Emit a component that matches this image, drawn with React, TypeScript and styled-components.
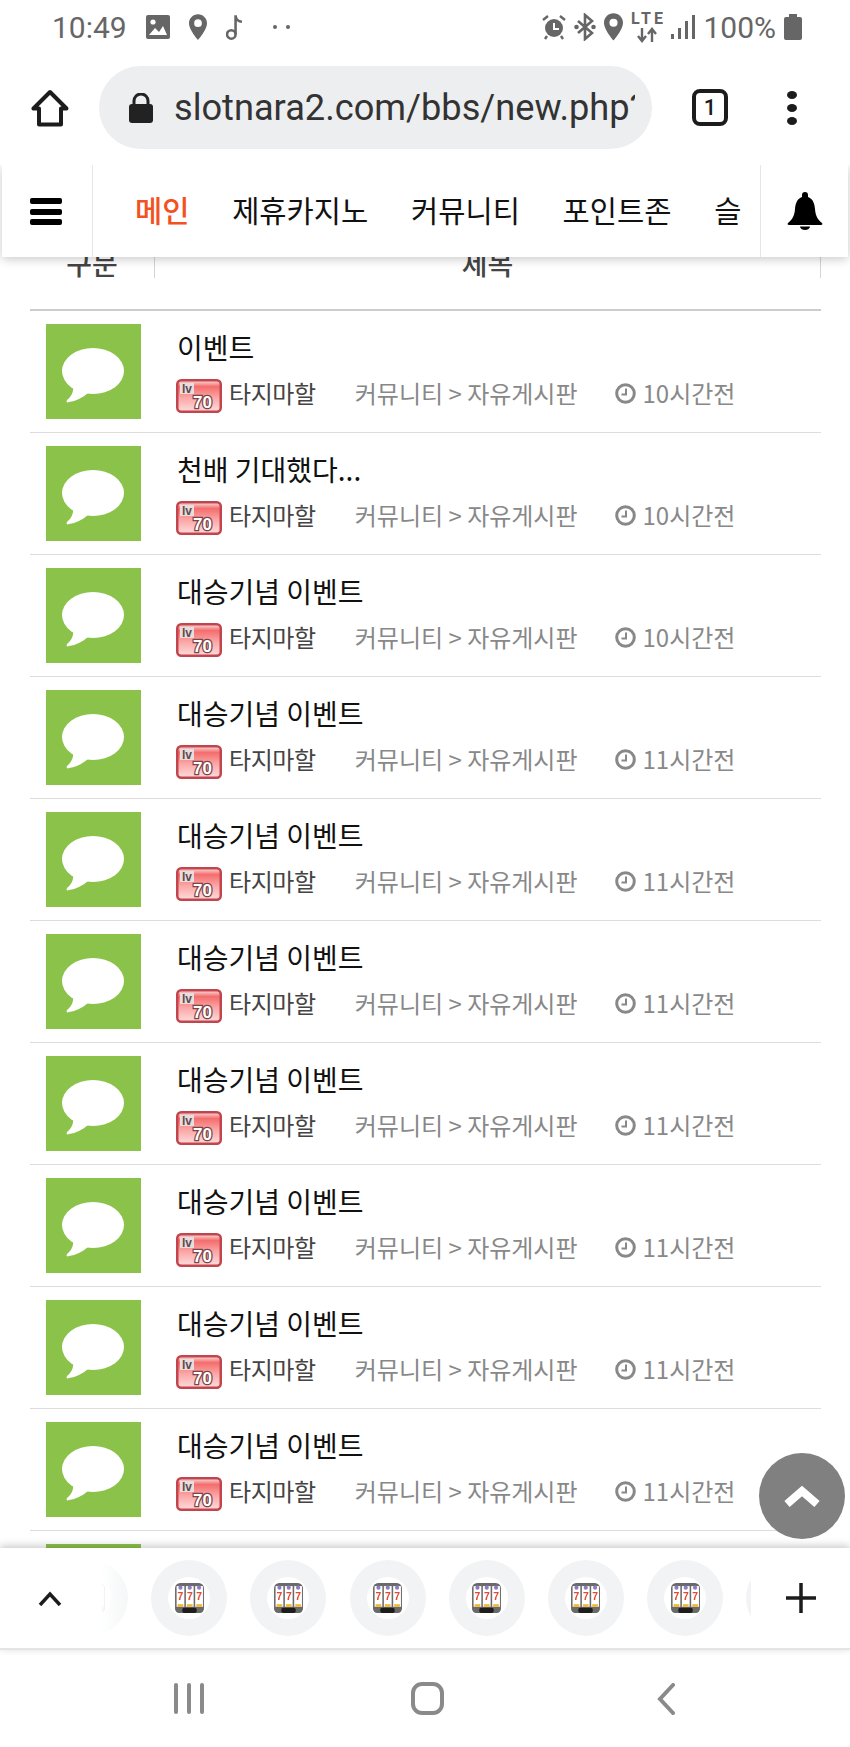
import React from 'react';
import styled, { createGlobalStyle } from 'styled-components';

const GlobalStyle = createGlobalStyle`
  html, body {
    margin: 0;
    padding: 0;
    background: #ffffff;
  }
  * {
    box-sizing: border-box;
  }
`;

const Page = styled.div`
  width: 850px;
  height: 1747px;
  display: flex;
  flex-direction: column;
  overflow: hidden;
  background: #ffffff;
  font-family: 'Noto Sans CJK KR', 'Liberation Sans', sans-serif;
`;

/* android status bar */
const StatusBar = styled.div`
  height: 60px;
  flex: none;
  display: flex;
  align-items: center;
  justify-content: space-between;
  padding: 0 48px 6px 52px;
  color: #666666;
  font-family: Roboto, 'Liberation Sans', sans-serif;
  font-size: 30px;
`;

const StatusGroup = styled.div<{ $gap: number }>`
  display: flex;
  align-items: center;
  gap: ${props => props.$gap}px;
`;

const StatusDots = styled.div`
  display: flex;
  gap: 9px;
  margin-left: 11px;

  span {
    width: 4px;
    height: 4px;
    border-radius: 50%;
    background: #666666;
  }
`;

/* chrome toolbar */
const BrowserBar = styled.div`
  height: 105px;
  flex: none;
  display: flex;
  align-items: center;
  padding: 6px 0 16px 31px;
`;

const UrlPill = styled.div`
  width: 553px;
  height: 83px;
  margin-left: 30px;
  display: flex;
  align-items: center;
  gap: 21px;
  padding: 0 17px 0 30px;
  border-radius: 42px;
  background: #eceef0;
  overflow: hidden;
`;

const UrlText = styled.div`
  flex: 1;
  overflow: hidden;
  white-space: nowrap;
  color: #333333;
  font-family: Roboto, 'Liberation Sans', sans-serif;
  font-size: 36.2px;
`;

const TabCount = styled.div`
  width: 36px;
  height: 37px;
  margin-left: 40px;
  display: flex;
  align-items: center;
  justify-content: center;
  border: 4px solid #1c1c1c;
  border-radius: 8px;
  color: #1c1c1c;
  font-family: Roboto, 'Liberation Sans', sans-serif;
  font-size: 22px;
  font-weight: 500;
`;

const MoreDots = styled.div`
  margin-left: 59px;
  display: flex;
  flex-direction: column;
  gap: 5px;

  span {
    width: 10px;
    height: 8px;
    border-radius: 50%;
    background: #1c1c1c;
  }
`;

/* page area */
const Viewport = styled.div`
  position: relative;
  flex: 1 1 0;
  min-height: 0;
  overflow: hidden;
  padding: 0 29px 0 30px;
`;

const SiteNav = styled.div`
  position: absolute;
  top: 0;
  left: 2px;
  right: 2px;
  height: 92px;
  z-index: 2;
  display: flex;
  background: #ffffff;
  box-shadow: 0 2px 10px rgba(0, 0, 0, 0.22);
`;

const MenuButton = styled.div`
  width: 91px;
  flex: none;
  display: flex;
  flex-direction: column;
  gap: 4.5px;
  padding: 33px 0 0 28px;
  border-right: 1px solid #e6e6e6;

  span {
    width: 32px;
    height: 6px;
    border-radius: 2px;
    background: #000000;
  }
`;

const MenuList = styled.div`
  flex: 1;
  display: flex;
  align-items: center;
  gap: 42.7px;
  padding: 0 0 4px 42px;
  overflow: hidden;
  white-space: nowrap;
`;

const MenuItem = styled.div<{ $active?: boolean }>`
  font-size: 29.6px;
  font-weight: ${props => (props.$active ? 500 : 400)};
  color: ${props => (props.$active ? '#f4511e' : '#111111')};
`;

const BellButton = styled.div`
  width: 88px;
  flex: none;
  display: flex;
  justify-content: center;
  padding-top: 27px;
  border-left: 1px solid #e6e6e6;
`;

const TableHead = styled.div`
  height: 146px;
  display: flex;
  padding-bottom: 33px;
  border-bottom: 2px solid #cccccc;
`;

const HeadCell = styled.div<{ $grow?: boolean }>`
  height: 113px;
  display: flex;
  align-items: flex-end;
  justify-content: center;
  flex: ${props => (props.$grow ? '1' : 'none')};
  width: ${props => (props.$grow ? 'auto' : '124px')};
  border-left: ${props => (props.$grow ? '1px solid #d5d5d5' : 'none')};
  border-right: ${props => (props.$grow ? '1px solid #d5d5d5' : 'none')};
  color: #444444;
  font-size: 28px;
  font-weight: 500;
  line-height: 30px;
`;

const Row = styled.div`
  height: 122px;
  display: flex;
  padding: 13px 0 0 16px;
  border-bottom: 1px solid #dddddd;
`;

const Thumb = styled.div`
  width: 95px;
  height: 95px;
  flex: none;
  background: #8bc34a;
`;

const RowBody = styled.div`
  margin-left: 36px;
  min-width: 0;
`;

const RowTitle = styled.div`
  height: 40px;
  margin-top: 3px;
  color: #111111;
  font-size: 28px;
  line-height: 40px;
`;

const RowMeta = styled.div`
  display: flex;
  align-items: center;
  height: 36px;
  margin-top: 8px;
  margin-left: -1px;
  font-size: 24px;
  line-height: 36px;
  white-space: nowrap;
`;

const BadgeSlot = styled.span`
  display: flex;
  margin-top: 6px;
`;

const Writer = styled.span`
  margin-left: 7px;
  letter-spacing: -0.4px;
  color: #444444;
`;

const Board = styled.span`
  margin-left: 39px;
  color: #888888;
`;

const Time = styled.span`
  display: flex;
  align-items: center;
  gap: 7px;
  margin-left: 37px;
  color: #888888;
`;

const TopButton = styled.div`
  position: absolute;
  right: 5px;
  top: 1288px;
  width: 86px;
  height: 86px;
  z-index: 1;
  display: flex;
  align-items: center;
  justify-content: center;
  border-radius: 50%;
  background: #808080;
`;

/* chrome bottom group strip */
const TabStrip = styled.div`
  position: relative;
  z-index: 3;
  height: 102px;
  flex: none;
  display: flex;
  align-items: center;
  background: #ffffff;
  border-bottom: 2px solid #e4e4e4;
  box-shadow: 0 -2px 8px rgba(0, 0, 0, 0.22);
`;

const StripArrow = styled.div`
  width: 101px;
  flex: none;
  display: flex;
  justify-content: flex-start;
  padding-left: 38px;
`;

const StripList = styled.div`
  width: 650px;
  flex: none;
  display: flex;
  gap: 23.2px;
  overflow: hidden;
  mask-image: linear-gradient(to right, transparent 0, #000 38px);
`;

const SlotCircle = styled.div<{ $first?: boolean }>`
  width: 76px;
  height: 76px;
  flex: none;
  display: flex;
  align-items: center;
  justify-content: center;
  margin-left: ${props => (props.$first ? '-49px' : '0')};
  border-radius: 50%;
  background: #f1f3f4;
`;

const SlotInner = styled.div`
  width: 42px;
  height: 42px;
  display: flex;
  align-items: center;
  justify-content: center;
  border-radius: 50%;
  background: #ffffff;
`;

const StripPlus = styled.div`
  margin-left: 35px;
  display: flex;
`;

/* android nav buttons */
const SystemNav = styled.div`
  height: 97px;
  flex: none;
  display: flex;
  align-items: center;
  padding: 0 0 0 174px;
`;

const RecentsIcon = styled.div`
  display: flex;
  gap: 9px;

  span {
    width: 4px;
    height: 31px;
    border-radius: 2px;
    background: #8a8a8a;
  }
`;

const HomeIcon = styled.div`
  width: 33px;
  height: 33px;
  margin-left: 207px;
  border: 4px solid #8a8a8a;
  border-radius: 11px;
`;

const BackIcon = styled.div`
  margin-left: 213px;
  display: flex;
`;

const ChatBubble = () => (
  <svg width="95" height="95" viewBox="0 0 95 95">
    <ellipse cx="47" cy="47" rx="31" ry="23" fill="#fff" />
    <path d="M27 60c1 7-1 12-6 16-1 2 0 3 2 2 7-1 13-4 19-9z" fill="#fff" />
  </svg>
);

const LevelBadge = () => (
  <svg width="46" height="34" viewBox="0 0 46 34">
    <defs>
      <linearGradient id="lvBg" x1="0" y1="0" x2="0" y2="1">
        <stop offset="0" stopColor="#f9e3e3" />
        <stop offset="0.2" stopColor="#f46d6d" />
        <stop offset="0.55" stopColor="#fba5a5" />
        <stop offset="1" stopColor="#ffdcdc" />
      </linearGradient>
    </defs>
    <rect x="1.25" y="1.25" width="43.5" height="31.5" rx="4" fill="url(#lvBg)" stroke="#c2454d" strokeWidth="2.5" />
    <rect x="4" y="4" width="14" height="11" fill="#e9dcdc" />
    <text x="6" y="14" fontFamily="Liberation Sans" fontSize="12" fontWeight="700" fill="#5f4a4c">lv</text>
    <text x="17" y="29" fontFamily="Liberation Sans" fontSize="17" fontWeight="700" fill="#fff" stroke="#7a4347" strokeWidth="2.5" paintOrder="stroke">70</text>
  </svg>
);

const ClockIcon = () => (
  <svg width="21" height="21" viewBox="0 0 21 21" fill="none" stroke="#888" strokeWidth="3">
    <circle cx="10.5" cy="10.5" r="8.8" />
    <path d="M11 5.5v6H6.5" strokeWidth="2" />
  </svg>
);

const SlotIcon = () => (
  <svg width="29" height="31" viewBox="0 0 28 30">
    <path d="M5 0h18a5 5 0 015 5v20a4 4 0 01-4 4H4a4 4 0 01-4-4V5a5 5 0 015-5z" fill="#6a6a6a" />
    <rect x="7" y="24" width="14" height="5" rx="2" fill="#1d1d1d" />
    {[1.5, 10.5, 19.5].map(x => (
      <g key={x}>
        <rect x={x} y="3" width="7.500" height="20" fill="#ffffff" />
        <circle cx={x + 3.75} cy="4.500" r="2" fill="#8e7cc3" />
        <rect x={x + 1} y="20.500" width="5.500" height="2.500" fill="#f1b72e" />
        <text x={x + 3.75} y="16.500" textAnchor="middle" fontFamily="Liberation Sans" fontSize="10" fontWeight="700" fill="#e2492f">7</text>
      </g>
    ))}
  </svg>
);

const StatusIcons = {
  Image: () => (
    <svg width="24" height="24" viewBox="0 0 24 24">
      <path d="M0 2a2 2 0 012-2h20a2 2 0 012 2v20a2 2 0 01-2 2H2a2 2 0 01-2-2z" fill="#666" />
      <circle cx="7" cy="7" r="2.6" fill="#fff" />
      <path d="M3 20l6-7 4 4 4-6 4 9z" fill="#fff" />
    </svg>
  ),
  Place: ({ size = 18 }: { size?: number }) => (
    <svg width={size} height={size * 1.45} viewBox="5 2 14 20">
      <path d="M12 2C8.13 2 5 5.13 5 9c0 5.25 7 13 7 13s7-7.75 7-13c0-3.87-3.13-7-7-7zm0 10a3 3 0 010-6 3 3 0 010 6z" fill="#666" />
    </svg>
  ),
  Note: () => (
    <svg width="17" height="28" viewBox="0 0 16 26" fill="none" stroke="#666" strokeWidth="2.4">
      <circle cx="5" cy="20" r="4" />
      <path d="M9 20V2c0 4 3 6 6 6" />
    </svg>
  ),
  Alarm: () => (
    <svg width="24" height="26" viewBox="0 0 24 26" fill="none" stroke="#666">
      <circle cx="12" cy="14" r="9" fill="#666" stroke="none" />
      <path d="M12 9v6h5" stroke="#fff" strokeWidth="2" />
      <path d="M1 6l5-4M23 6l-5-4M5 22l-2 3M19 22l2 3" strokeWidth="2.4" />
    </svg>
  ),
  Bluetooth: () => (
    <svg width="22" height="28" viewBox="0 0 22 28" fill="none" stroke="#666" strokeWidth="2.6">
      <path d="M4 8l14 12-7 6V2l7 6L4 20" />
      <circle cx="2.5" cy="14" r="1" fill="#666" />
      <circle cx="19.5" cy="14" r="1" fill="#666" />
    </svg>
  ),
  Lte: () => (
    <svg width="32" height="34" viewBox="0 0 32 34">
      <text x="0" y="14" fontFamily="Roboto" fontSize="16" fontWeight="700" fill="#666" textLength="32">LTE</text>
      <path d="M11 18v12M7 26l4 5 4-5M21 32V20M17 24l4-5 4 5" fill="none" stroke="#666" strokeWidth="2.4" />
    </svg>
  ),
  Signal: () => (
    <svg width="24" height="26" viewBox="0 0 24 26" fill="#666">
      <rect x="0" y="20" width="3" height="5" />
      <rect x="7" y="14" width="3" height="11" />
      <rect x="14" y="7" width="3" height="18" />
      <rect x="21" y="1" width="3" height="24" />
    </svg>
  ),
  Battery: () => (
    <svg width="18" height="26" viewBox="0 0 18 26" fill="#666">
      <path d="M5 0h8v3h3a2 2 0 012 2v19a2 2 0 01-2 2H2a2 2 0 01-2-2V5a2 2 0 012-2h3z" />
    </svg>
  )
};

const rows = [
  { title: '이벤트', time: '10시간전' },
  { title: '천배 기대했다...', time: '10시간전' },
  { title: '대승기념 이벤트', time: '10시간전' },
  { title: '대승기념 이벤트', time: '11시간전' },
  { title: '대승기념 이벤트', time: '11시간전' },
  { title: '대승기념 이벤트', time: '11시간전' },
  { title: '대승기념 이벤트', time: '11시간전' },
  { title: '대승기념 이벤트', time: '11시간전' },
  { title: '대승기념 이벤트', time: '11시간전' },
  { title: '대승기념 이벤트', time: '11시간전' },
  { title: '대승기념 이벤트', time: '11시간전' }
];

const App: React.FC = () => {
  return (
    <Page>
      <GlobalStyle />
      <StatusBar>
        <StatusGroup $gap={19}>
          <span>10:49</span>
          <StatusIcons.Image />
          <StatusIcons.Place />
          <StatusIcons.Note />
          <StatusDots>
            <span />
            <span />
          </StatusDots>
        </StatusGroup>
        <StatusGroup $gap={8}>
          <StatusIcons.Alarm />
          <StatusIcons.Bluetooth />
          <StatusIcons.Place size={19} />
          <StatusIcons.Lte />
          <StatusIcons.Signal />
          <span>100%</span>
          <StatusIcons.Battery />
        </StatusGroup>
      </StatusBar>

      <BrowserBar>
        <svg width="38" height="38" viewBox="0 0 38 38" fill="none" stroke="#1c1c1c" strokeWidth="4" strokeLinejoin="round">
          <path d="M19 3L2.5 19.5H8V35.5H30V19.5H35.5z" />
        </svg>
        <UrlPill>
          <svg width="24" height="30" viewBox="0 0 24 30">
            <path d="M5 12V8a7 7 0 0114 0v4" fill="none" stroke="#222" strokeWidth="3" />
            <rect x="0" y="11" width="24" height="19" rx="3" fill="#222" />
          </svg>
          <UrlText>slotnara2.com/bbs/new.php?</UrlText>
        </UrlPill>
        <TabCount>1</TabCount>
        <MoreDots>
          <span />
          <span />
          <span />
        </MoreDots>
      </BrowserBar>

      <Viewport>
        <SiteNav>
          <MenuButton>
            <span />
            <span />
            <span />
          </MenuButton>
          <MenuList>
            <MenuItem $active>메인</MenuItem>
            <MenuItem>제휴카지노</MenuItem>
            <MenuItem>커뮤니티</MenuItem>
            <MenuItem>포인트존</MenuItem>
            <MenuItem>슬</MenuItem>
          </MenuList>
          <BellButton>
            <svg width="36" height="38" viewBox="0 0 36 38">
              <path d="M18 0a3 3 0 013 3v2c4.500 1.500 6.500 6 7 12 .500 6 2 10 7 14 .800 1 .300 2-1 2H2c-1.300 0-1.800-1-1-2 5-4 6.500-8 7-14 .500-6 2.500-10.500 7-12V3a3 3 0 013-3z" />
              <path d="M13 34.500h10a5 3.500 0 01-10 0z" />
            </svg>
          </BellButton>
        </SiteNav>

        <TableHead>
          <HeadCell>구문</HeadCell>
          <HeadCell $grow>제목</HeadCell>
        </TableHead>

        {rows.map((row, index) => (
          <Row key={index}>
            <Thumb>
              <ChatBubble />
            </Thumb>
            <RowBody>
              <RowTitle>{row.title}</RowTitle>
              <RowMeta>
                <BadgeSlot>
                  <LevelBadge />
                </BadgeSlot>
                <Writer>타지마할</Writer>
                <Board>커뮤니티 &gt; 자유게시판</Board>
                <Time>
                  <ClockIcon />
                  {row.time}
                </Time>
              </RowMeta>
            </RowBody>
          </Row>
        ))}

        <TopButton>
          <svg width="36" height="22" viewBox="0 0 36 22" fill="none" stroke="#fff" strokeWidth="8">
            <path d="M3 19L18 6l15 13" />
          </svg>
        </TopButton>
      </Viewport>

      <TabStrip>
        <StripArrow>
          <svg width="24" height="15" viewBox="0 0 24 15" fill="none" stroke="#1c1c1c" strokeWidth="3.500">
            <path d="M2 14L12 3l10 11" />
          </svg>
        </StripArrow>
        <StripList>
          {[0, 1, 2, 3, 4, 5, 6, 7].map(i => (
            <SlotCircle key={i} $first={i === 0}>
              <SlotInner>
                <SlotIcon />
              </SlotInner>
            </SlotCircle>
          ))}
        </StripList>
        <StripPlus>
          <svg width="30" height="30" viewBox="0 0 30 30" stroke="#1c1c1c" strokeWidth="3.500">
            <path d="M15 0v30M0 15h30" />
          </svg>
        </StripPlus>
      </TabStrip>

      <SystemNav>
        <RecentsIcon>
          <span />
          <span />
          <span />
        </RecentsIcon>
        <HomeIcon />
        <BackIcon>
          <svg width="18" height="32" viewBox="0 0 18 32" fill="none" stroke="#8a8a8a" strokeWidth="4" strokeLinecap="round">
            <path d="M16 2L3 16l13 14" />
          </svg>
        </BackIcon>
      </SystemNav>
    </Page>
  );
};

export default App;
